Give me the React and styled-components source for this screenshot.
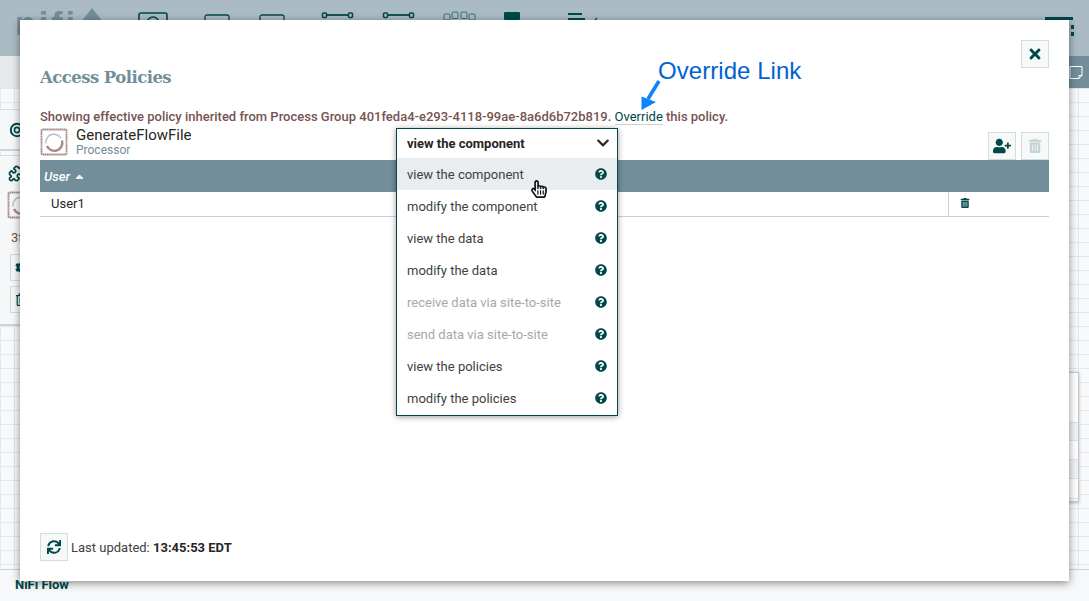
import React from "react";
import styled, { createGlobalStyle } from "styled-components";
import { FaTimes, FaUserPlus, FaRegTrashAlt, FaTrashAlt, FaSync, FaQuestionCircle, FaChevronDown, FaCaretUp, FaRegHandPointer, FaCog } from "react-icons/fa";
import { Puzzle } from "lucide-react";

const Global = createGlobalStyle`
  html, body { margin: 0; padding: 0; width: 1089px; height: 601px; overflow: hidden; background: #f7f8f9; }
  * { box-sizing: border-box; }
  body { font-family: Roboto, "Liberation Sans", sans-serif; font-size: 13px; }
`;

const Page = styled.div`
  position: relative; width: 1089px; height: 601px; display: flex; flex-direction: column; overflow: hidden;
`;
const Header = styled.header`
  height: 56px; background: #aabbc3; display: flex; align-items: flex-start; flex: none;
`;
const Logo = styled.div`
  margin-left: 15px; margin-top: 6px; display: flex; align-items: flex-start; color: #728e9b;
  font: 700 34px/34px "Liberation Sans", sans-serif; letter-spacing: 3px; width: 100px; height: 40px;
`;
const Tool = styled.svg`
  flex: none; margin-left: ${p => p.$left}px; margin-top: ${p => p.$top}px; color: #004849;
`;
const Strip = styled.div`
  height: 32px; flex: none; background: #e6eaed; display: flex; justify-content: flex-end;
`;
const StripEnd = styled.div`
  width: 60px; background: #728e9b; display: flex; justify-content: flex-end; align-items: center; padding-right: 6px;
`;
const Canvas = styled.div`
  position: relative; flex: 1; overflow: hidden; background-color: #f8f9fa;
  background-image: linear-gradient(#e3e8eb 1px, transparent 1px), linear-gradient(90deg, #e3e8eb 1px, transparent 1px);
  background-size: 14px 14px; background-position: 0 0;
  border-bottom: 1px solid #c9d3d8;
`;
const Palette = styled.div`
  position: absolute; left: 0; top: ${p => p.$top}px; width: 70px; height: ${p => p.$h}px; background: #f6f7f8;
  border-top: 1px solid #d5dcdf; border-bottom: 2px solid #c9d3d8; color: #004849;
`;
const PalItem = styled.div`
  position: absolute; left: ${p => p.$x}px; top: ${p => p.$y}px; color: ${p => p.$c || "#004849"}; font-size: 13px; line-height: 14px; display: flex;
`;
const PalButton = styled.div`
  position: absolute; left: 10px; top: ${p => p.$y}px; width: 28px; height: 27px; border: 1px solid #cfdadd; background: #f6f8f8;
  color: #004849; display: flex; align-items: center; padding-left: 4px;
`;
const Graph = styled.div`
  position: absolute; left: 1050px; top: 284px; width: 29px; height: 130px; background: #fafafa;
  border: 1px solid #c5c9cb; box-shadow: 0 1px 3px rgba(0,0,0,.25);
  display: flex; flex-direction: column;
`;
const GraphRow = styled.div`
  height: ${p => p.$h}px; background: ${p => p.$b}; border-bottom: 1px solid #dde3e6;
`;
const Footer = styled.footer`
  height: 31px; flex: none; background: #f7f8f9; padding: 7px 0 0 15px; color: #004849; font-weight: 700; font-size: 13px; line-height: 16px;
`;

const Dialog = styled.div`
  position: absolute; left: 20px; top: 20px; width: 1049px; height: 561px; background: #fff;
  box-shadow: 0 2px 8px rgba(0,0,0,.45); padding: 20px; display: flex; flex-direction: column;
`;
const SquareButton = styled.button`
  width: 28px; height: 28px; padding: 0; display: flex; align-items: center; justify-content: center;
  background: #f7f9f9; border: 1px solid #cfdfe0; color: ${p => p.$off ? "#c4d3d3" : "#004849"}; font-size: ${p => p.$size || 14}px;
`;
const TitleRow = styled.div`
  display: flex; justify-content: space-between; align-items: flex-start; height: 48px; flex: none;
`;
const Title = styled.h2`
  margin: 28px 0 0; font: 700 16.5px/20px "DejaVu Serif", serif; color: #728e9b; letter-spacing: -0.55px;
`;
const Message = styled.div`
  margin-top: 19px; height: 21px; flex: none; line-height: 20px; color: #775351; font-weight: 500; font-size: 13px; letter-spacing: 0; white-space: nowrap;
`;
const OverrideLink = styled.span`
  color: #004849; font-weight: 400; border-bottom: 1px solid #c7d2d7;
`;
const ComponentRow = styled.div`
  display: flex; height: 32px; flex: none; align-items: flex-start;
`;
const ComponentInfo = styled.div`
  margin-left: 8px; flex: 1;
`;
const ComponentName = styled.div`
  font-size: 15px; line-height: 14px; color: #262626; letter-spacing: 0;
`;
const ComponentType = styled.div`
  font-size: 12px; line-height: 15px; color: #728e9b; margin-top: 1px;
`;
const Actions = styled.div`
  display: flex; gap: 5px; padding-top: 4px;
`;
const TableHead = styled.div`
  height: 32px; flex: none; background: #728e9b; color: #fff; font-style: italic; font-weight: 500; font-size: 13px;
  display: flex; align-items: center; padding-left: 4px; gap: 3px;
`;
const SortArrow = styled.span`
  font-size: 13px; display: flex; font-style: normal; margin-top: 1px; color: #eef2f4;
`;
const TableRow = styled.div`
  height: 25px; flex: none; border-bottom: 1px solid #c7d2d7; display: flex; align-items: stretch; color: #262626;
`;
const NameCell = styled.div`
  width: 909px; padding-left: 11px; line-height: 23px; border-right: 1px solid #c7d2d7;
`;
const ActionCell = styled.div`
  flex: 1; padding-left: 11px; padding-bottom: 2px; color: #004849; font-size: 10px; display: flex; align-items: center;
`;
const Spacer = styled.div`flex: 1;`;
const UpdateBar = styled.div`
  display: flex; align-items: center; gap: 3px; height: 28px; flex: none; color: #414141;
  b { font-weight: 700; color: #262626; }
`;
const Select = styled.div`
  position: absolute; left: 376px; top: 108px; width: 222px; height: 288px; background: #fff; border: 1px solid #004849;
  box-shadow: 0 1px 6px rgba(0,0,0,.4);
`;
const SelectHead = styled.div`
  height: 30px; margin-bottom: -1px; padding: 0 7px 2px 10px; display: flex; align-items: center; justify-content: space-between; font-weight: 700; color: #262626;
`;
const Option = styled.div`
  height: 32px; display: flex; align-items: center; justify-content: space-between; padding: 0 10px;
  background: ${p => p.$hover ? "#e9edef" : "#fff"}; color: ${p => p.$off ? "#a8a8a8" : "#414141"};
`;
const Help = styled.span`
  color: #004849; font-size: 12px; display: flex;
`;
const Chevron = styled.span`
  color: #262626; font-size: 14px; display: flex;
`;
const Cursor = styled.span`
  position: absolute; left: 530px; top: 180px; color: #111; font-size: 18px; display: flex;
`;
const Callout = styled.div`
  position: absolute; left: 658px; top: 56px; font: 400 24px/30px "Liberation Sans", sans-serif; color: #0063d1; white-space: nowrap; letter-spacing: .05px;
`;
const CalloutArrow = styled.svg`
  position: absolute; left: 636px; top: 78px;
`;

const ProcessorIcon = ({ size = 28 }) => (
  <svg width={size} height={size} viewBox="0 0 28 28" fill="none">
    <rect x="1.5" y="1.5" width="25" height="25" stroke="#a98a88" strokeWidth="1.8" strokeDasharray="1.6 .35" rx="1" />
    <path d="M6 15.500a8 8 0 0 1 15-5" stroke="#b5c0c5" strokeWidth="1.5" />
    <path d="M22 12.500a8 8 0 0 1-15 5.500" stroke="#a98a88" strokeWidth="2.4" />
  </svg>
);

const opts = [
  ["view the component", false, true],
  ["modify the component"],
  ["view the data"],
  ["modify the data"],
  ["receive data via site-to-site", true],
  ["send data via site-to-site", true],
  ["view the policies"],
  ["modify the policies"],
];

export default function App() {
  return (
    <Page>
      <Global />
      <Header>
        <Logo>nifi</Logo>
        <Tool $left={-34} $top={8} width="22" height="14" viewBox="0 0 22 14"><path d="M11 0 22 14H0Z" fill="#728e9b" /></Tool>
        <Tool $left={35} $top={12} width="30" height="20" viewBox="0 0 30 20" fill="none" stroke="currentColor" strokeWidth="1.6"><rect x="1" y="1" width="28" height="18" rx="2" /><circle cx="15" cy="11" r="6" /></Tool>
        <Tool $left={36} $top={14} width="26" height="16" viewBox="0 0 26 16" fill="none" stroke="currentColor" strokeWidth="1.3"><rect x="1" y="1" width="24" height="14" rx="2" /></Tool>
        <Tool $left={29} $top={14} width="26" height="16" viewBox="0 0 26 16" fill="none" stroke="currentColor" strokeWidth="1.3"><rect x="1" y="1" width="24" height="14" rx="2" /></Tool>
        <Tool $left={36} $top={11} width="34" height="12" viewBox="0 0 34 12" fill="none" stroke="currentColor"><rect x="1.5" y="2" width="4" height="4.5" rx="1" strokeWidth="1.5" /><rect x="27.5" y="2" width="4" height="4.5" rx="1" strokeWidth="1.5" /><path d="M6 4h21" strokeWidth="1.8" /><path d="M2 9.5h2M29 9.5h2" strokeWidth="1.2" /></Tool>
        <Tool $left={27} $top={11} width="34" height="12" viewBox="0 0 34 12" fill="none" stroke="currentColor"><rect x="1.5" y="2" width="4" height="4.5" rx="1" strokeWidth="1.5" /><rect x="27.5" y="2" width="4" height="4.5" rx="1" strokeWidth="1.5" /><path d="M6 4h21" strokeWidth="1.8" /><path d="M2 9.5h2M29 9.5h2" strokeWidth="1.2" /></Tool>
        <Tool $left={27} $top={11} width="34" height="12" viewBox="0 0 34 12" fill="none" stroke="#2c6a70" strokeWidth=".9"><rect x="1" y="3" width="6" height="6" rx="1" /><rect x="9" y="1" width="6" height="6.5" rx="1" /><rect x="18" y="1" width="6" height="6.5" rx="1" /><rect x="26" y="3" width="6" height="6" rx="1" /></Tool>
        <Tool $left={27} $top={11} width="18" height="10" viewBox="0 0 18 10" fill="currentColor"><rect x="0" y="1" width="16" height="8" rx="1" /></Tool>
        <Tool $left={45} $top={12} width="32" height="9" viewBox="0 0 32 9" fill="none" stroke="currentColor" strokeWidth="1.8"><path d="M1 2h14M1 7h17" /><path d="M28 8l2-2" strokeWidth="1.2" /></Tool>
        <Tool $left={446} $top={17} width="29" height="22" viewBox="0 0 29 22" fill="currentColor"><rect x="0" y="0" width="28" height="3" /><rect x="26" y="8" width="3" height="4" /><rect x="26" y="15" width="3" height="4" /></Tool>
      </Header>
      <Strip>
        <StripEnd>
          <svg width="14" height="13" viewBox="0 0 14 13" fill="none" stroke="#fff" strokeWidth="1"><path d="M1 .5h12v9l-3 3H1Z" /><path d="M10 12.5v-3h3" /></svg>
        </StripEnd>
      </Strip>
      <Canvas>
        <Palette $top={21} $h={42}>
          <PalItem $x={9} $y={12}>
            <svg width="16" height="16" viewBox="0 0 16 16" fill="none" stroke="#004849"><circle cx="8" cy="8" r="6.2" strokeWidth="2" /><circle cx="8" cy="8" r="2.6" strokeWidth="1.6" /></svg>
          </PalItem>
        </Palette>
        <Palette $top={67} $h={171}>
          <PalItem $x={8} $y={9}><Puzzle size={17} strokeWidth={2.4} /></PalItem>
          <PalItem $x={7} $y={35}><ProcessorIcon /></PalItem>
          <PalItem $x={11} $y={75} $c="#775351">3f</PalItem>
          <PalButton $y={98}><FaCog /></PalButton>
          <PalButton $y={130}><FaRegTrashAlt /></PalButton>
        </Palette>
        <Graph>
          <GraphRow $h={50} $b="#fff" />
          <GraphRow $h={18} $b="#f1f3f4" />
          <GraphRow $h={19} $b="#fff" />
          <GraphRow $h={19} $b="#f1f3f4" />
          <GraphRow $h={20} $b="#fff" />
        </Graph>
      </Canvas>
      <Footer>NiFi Flow</Footer>
      <Dialog>
        <TitleRow>
          <Title>Access Policies</Title>
          <SquareButton aria-label="Close" $size={16}><FaTimes /></SquareButton>
        </TitleRow>
        <Message>
          Showing effective policy inherited from Process Group 401feda4-e293-4118-99ae-8a6d6b72b819. <OverrideLink>Override</OverrideLink> this policy.
        </Message>
        <ComponentRow>
          <ProcessorIcon />
          <ComponentInfo>
            <ComponentName>GenerateFlowFile</ComponentName>
            <ComponentType>Processor</ComponentType>
          </ComponentInfo>
          <Actions>
            <SquareButton aria-label="Add user" $size={18}><FaUserPlus /></SquareButton>
            <SquareButton aria-label="Delete" $off><FaTrashAlt /></SquareButton>
          </Actions>
        </ComponentRow>
        <TableHead>User <SortArrow><FaCaretUp /></SortArrow></TableHead>
        <TableRow>
          <NameCell>User1</NameCell>
          <ActionCell><FaTrashAlt /></ActionCell>
        </TableRow>
        <Spacer />
        <UpdateBar>
          <SquareButton aria-label="Refresh" $size={14}><FaSync /></SquareButton>
          <span>Last updated: <b>13:45:53 EDT</b></span>
        </UpdateBar>
        <Select>
          <SelectHead>view the component <Chevron><FaChevronDown /></Chevron></SelectHead>
          {opts.map(([label, off, hover]) => (
            <Option key={label} $off={off} $hover={hover}>
              {label}
              <Help><FaQuestionCircle /></Help>
            </Option>
          ))}
        </Select>
      </Dialog>
      <Cursor><FaRegHandPointer /></Cursor>
      <Callout>Override Link</Callout>
      <CalloutArrow width="26" height="34" viewBox="0 0 26 34" fill="none">
        <path d="M23 3 12 21" stroke="#0a84ff" strokeWidth="3.6" />
        <path d="M5.500 32 5.500 18.500 20 24Z" fill="#0a84ff" />
      </CalloutArrow>
    </Page>
  );
}
